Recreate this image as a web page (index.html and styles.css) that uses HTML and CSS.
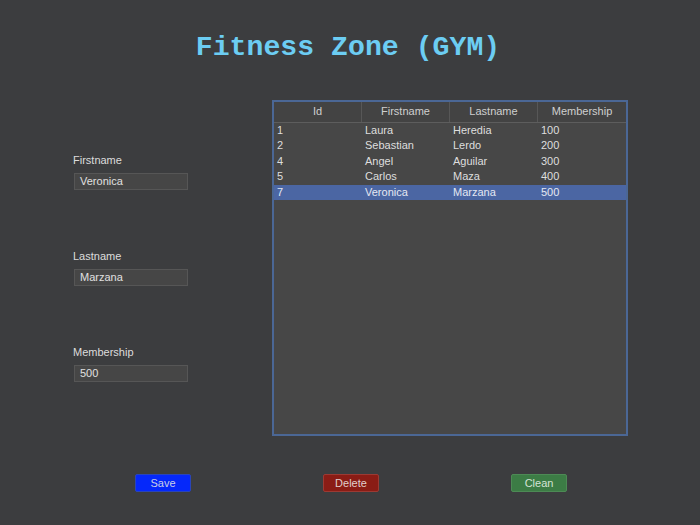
FILE: index.html
```html
<!DOCTYPE html>
<html>
<head>
<meta charset="utf-8">
<link rel="stylesheet" href="styles.css">
</head>
<body>
<div class="app">
  <h1 class="title">Fitness Zone (GYM)</h1>
  <div class="main">
    <div class="form">
      <div class="field">
        <label class="label">Firstname</label>
        <div class="input">Veronica</div>
      </div>
      <div class="field">
        <label class="label">Lastname</label>
        <div class="input">Marzana</div>
      </div>
      <div class="field">
        <label class="label">Membership</label>
        <div class="input">500</div>
      </div>
    </div>
    <div class="table">
      <div class="row head">
        <div class="cell">Id</div>
        <div class="cell">Firstname</div>
        <div class="cell">Lastname</div>
        <div class="cell">Membership</div>
      </div>
      <div class="row"><div class="cell">1</div><div class="cell">Laura</div><div class="cell">Heredia</div><div class="cell">100</div></div>
      <div class="row"><div class="cell">2</div><div class="cell">Sebastian</div><div class="cell">Lerdo</div><div class="cell">200</div></div>
      <div class="row"><div class="cell">4</div><div class="cell">Angel</div><div class="cell">Aguilar</div><div class="cell">300</div></div>
      <div class="row"><div class="cell">5</div><div class="cell">Carlos</div><div class="cell">Maza</div><div class="cell">400</div></div>
      <div class="row selected"><div class="cell">7</div><div class="cell">Veronica</div><div class="cell">Marzana</div><div class="cell">500</div></div>
    </div>
  </div>
  <div class="actions">
    <button class="btn save">Save</button>
    <button class="btn delete">Delete</button>
    <button class="btn clean">Clean</button>
  </div>
</div>
</body>
</html>
```

FILE: styles.css
```css
html, body {
  margin: 0;
  padding: 0;
  background: #3c3d3f;
}
.app {
  width: 700px;
  height: 525px;
  box-sizing: border-box;
  background: #3c3d3f;
  font-family: "Liberation Sans", Arial, sans-serif;
  font-size: 11px;
  color: #dcdcdc;
  padding-top: 32px;
}
.title {
  margin: 0;
  height: 32px;
  line-height: 32px;
  text-align: center;
  font-family: "Liberation Mono", "Courier New", monospace;
  font-weight: bold;
  font-size: 28.2px;
  color: #6ccdf3;
  padding-right: 4px;
}
.main {
  display: flex;
  margin-top: 36px;
  padding-left: 73px;
}
.form {
  width: 199px;
  padding-top: 53px;
  display: flex;
  flex-direction: column;
  gap: 59px;
}
.field {
  display: flex;
  flex-direction: column;
  gap: 6px;
}
.label {
  height: 14px;
  line-height: 14px;
  color: #dcdcdc;
}
.input {
  margin-left: 1px;
  width: 114px;
  height: 17px;
  box-sizing: border-box;
  border: 1px solid #565656;
  background: #464646;
  line-height: 15px;
  padding-left: 5px;
  color: #e0e0e0;
}
.table {
  width: 356px;
  height: 336px;
  box-sizing: border-box;
  border: 2px solid #4b6795;
  background: #474747;
}
.row {
  display: grid;
  grid-template-columns: 88px 88px 88px 88px;
  height: 15.6px;
  line-height: 15.6px;
}
.row .cell {
  padding-left: 3px;
  white-space: nowrap;
  color: #dedede;
}
.row.head {
  height: 20.5px;
  line-height: 19px;
  background: #434343;
  border-bottom: 1px solid #5d5d5d;
  box-sizing: border-box;
}
.row.head .cell {
  padding-left: 0;
  text-align: center;
  border-right: 1px solid #575757;
  color: #cfcfcf;
}
.row.head .cell:last-child {
  border-right: none;
}
.row.selected {
  background: #4b66a3;
}
.row.selected .cell {
  color: #e4e8f2;
}
.actions {
  display: flex;
  margin-top: 38px;
  padding-left: 135px;
  gap: 132px;
}
.btn {
  width: 56px;
  height: 18px;
  padding: 0;
  margin: 0;
  font-family: "Liberation Sans", Arial, sans-serif;
  font-size: 11px;
  line-height: 16px;
  border-radius: 2px;
  cursor: default;
}
.btn.save {
  background: #0528fa;
  border: 1px solid #2a45b8;
  color: #c9cfe6;
}
.btn.delete {
  background: #8a1c15;
  border: 1px solid #9b3a33;
  color: #e0cfcd;
}
.btn.clean {
  background: #3c7c45;
  border: 1px solid #4d8a55;
  color: #d4e2d5;
}
```
